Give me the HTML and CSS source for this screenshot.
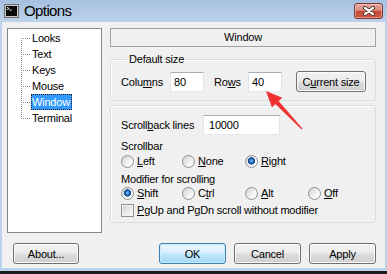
FILE: index.html
```html
<!DOCTYPE html>
<html>
<head>
<meta charset="utf-8">
<title>Options</title>
<link rel="stylesheet" href="styles.css">
</head>
<body>
<div class="win">
  <div class="titlebar">
    <svg class="appicon" width="15" height="14" viewBox="0 0 15 14">
      <rect x="0.5" y="0.5" width="14" height="13" fill="#c8c8c8" stroke="#6e6e6e"/>
      <rect x="2" y="2" width="11" height="10" fill="#0a0a0a"/>
      <path d="M3 3.3 L5.2 4.5 L3 5.7" stroke="#fff" fill="none" stroke-width="0.9"/>
      <rect x="5.5" y="5.6" width="2.2" height="0.9" fill="#fff"/>
    </svg>
    <span class="title">Options</span>
    <div class="close">
      <svg width="14" height="10" viewBox="0 0 14 10">
        <path d="M3 2 L11 8 M11 2 L3 8" stroke="#4b2a26" stroke-width="4" stroke-linecap="round"/>
        <path d="M3 2 L11 8 M11 2 L3 8" stroke="#fff" stroke-width="2.2" stroke-linecap="round"/>
      </svg>
    </div>
  </div>
  <div class="client">
    <div class="main">
      <ul class="tree">
        <li class="first"><span class="branch"></span><span class="lbl">Looks</span></li>
        <li><span class="branch"></span><span class="lbl">Text</span></li>
        <li><span class="branch"></span><span class="lbl">Keys</span></li>
        <li><span class="branch"></span><span class="lbl">Mouse</span></li>
        <li><span class="branch"></span><span class="lbl sel">Window</span></li>
        <li class="last"><span class="branch"></span><span class="lbl">Terminal</span></li>
      </ul>
      <div class="panel">
        <div class="header">Window</div>
        <fieldset class="group g1">
          <legend>Default size</legend>
          <div class="row">
            <span class="lab lab-cols">Colu<u>m</u>ns</span>
            <span class="edit ed-small">80</span>
            <span class="lab lab-rows">Ro<u>w</u>s</span>
            <span class="edit ed-small">40</span>
            <span class="btn btn-cur">C<u>u</u>rrent size</span>
          </div>
        </fieldset>
        <fieldset class="group g2">
          <div class="row sb-row">
            <span class="lab lab-sb">Scroll<u>b</u>ack lines</span>
            <span class="edit ed-wide">10000</span>
          </div>
          <div class="caption cap1">Scrollbar</div>
          <div class="radios r1">
            <span class="opt"><span class="radio"></span><u>L</u>eft</span>
            <span class="opt"><span class="radio"></span><u>N</u>one</span>
            <span class="opt"><span class="radio on"></span><u>R</u>ight</span>
          </div>
          <div class="caption cap2">Modifier for scrolling</div>
          <div class="radios r2">
            <span class="opt"><span class="radio on"></span><u>S</u>hift</span>
            <span class="opt"><span class="radio"></span>C<u>t</u>rl</span>
            <span class="opt"><span class="radio"></span><u>A</u>lt</span>
            <span class="opt"><span class="radio"></span><u>O</u>ff</span>
          </div>
          <div class="opt chk-row"><span class="check"></span><u>P</u>gUp and PgDn scroll without modifier</div>
        </fieldset>
      </div>
    </div>
    <div class="buttons">
      <span class="btn btn-about">About...</span>
      <div class="btn-group">
        <span class="btn btn-ok">OK</span>
        <span class="btn">Cancel</span>
        <span class="btn">Apply</span>
      </div>
    </div>
  </div>
  <div class="frame-bottom"></div>
  <div class="shadow"></div>
  <svg class="arrow" width="387" height="274" viewBox="0 0 387 274">
    <polygon points="266,91 282.3,97.8 278.6,101.1 302.4,128.6 301.6,129.4 275.4,104.1 271.9,107.6" fill="#f03232"/>
  </svg>
</div>
</body>
</html>
```

FILE: styles.css
```css
* { box-sizing: border-box; }
html, body { margin: 0; padding: 0; }
body {
  width: 387px;
  height: 274px;
  overflow: hidden;
  font-family: "Liberation Sans", Arial, sans-serif;
  font-size: 11px;
  letter-spacing: -0.2px;
  color: #000;
}
u { text-decoration: underline; text-underline-offset: 1px; text-decoration-thickness: 1px; }

.win {
  position: relative;
  width: 387px;
  height: 274px;
  background: #bcd2eb;
  display: flex;
  flex-direction: column;
}

/* title bar */
.titlebar {
  height: 22px;
  flex: none;
  display: flex;
  align-items: flex-start;
  background: linear-gradient(#a6c0df, #bdd2eb);
}
.appicon { margin: 4px 0 0 4px; flex: none; }
.title {
  margin: 2px 0 0 5px;
  font-size: 15px;
  line-height: 18px;
  letter-spacing: -0.6px;
}
.close {
  margin: 3px 4px 0 auto;
  width: 29px;
  height: 16px;
  border: 1px solid #7e3a33;
  border-radius: 3px;
  background: linear-gradient(#e6a99f 0%, #d8897b 45%, #c44b36 52%, #cc5a45 100%);
  box-shadow: inset 0 0 0 1px rgba(255, 220, 210, 0.45);
  display: flex;
  align-items: center;
  justify-content: center;
}

/* client */
.client {
  margin: 0 2px;
  height: 246px;
  flex: none;
  background: #f0f0f0;
  display: flex;
  flex-direction: column;
  padding: 6px 9px 0 5px;
}
.main { display: flex; gap: 8px; }

/* tree */
.tree {
  width: 95px;
  height: 205px;
  margin: 0;
  padding: 1px 0 0 0;
  list-style: none;
  background: #fff;
  border: 1px solid #828790;
}
.tree li { display: flex; height: 16px; align-items: center; }
.branch {
  width: 23px;
  height: 16px;
  flex: none;
  background-image:
    repeating-linear-gradient(to bottom, #8a8a8a 0 1px, transparent 1px 2px),
    repeating-linear-gradient(to right, #8a8a8a 0 1px, transparent 1px 2px);
  background-repeat: no-repeat;
  background-size: 1px 16px, 8px 1px;
  background-position: 13px 0, 15px 8px;
}
.tree li.first .branch { background-size: 1px 8px, 8px 1px; background-position: 13px 8px, 15px 8px; }
.tree li.last .branch { background-size: 1px 9px, 8px 1px; background-position: 13px 0, 15px 8px; }
.lbl { padding: 0 2px 0 1px; line-height: 16px; height: 16px; }
.lbl.sel { background: #3399ff; color: #fff; outline: 1px dotted #222; outline-offset: -1px; }

/* right panel */
.panel { width: 266px; display: flex; flex-direction: column; }
.header {
  height: 19px;
  border: 1px solid #a3a3a3;
  text-align: center;
  line-height: 17px;
}
.group {
  margin: 0;
  min-width: 0;
  border: 1px solid #d5dfe5;
  border-radius: 3px;
  box-shadow: inset 1px 1px 0 #fff;
}
.group legend { padding: 0 2px; margin-left: 6px; line-height: 14px; }
.g1 { margin-top: 5px; padding: 5px 0 8px 10px; }
.g2 { margin-top: 4px; padding: 8px 0 4px 10px; }

.row { display: flex; align-items: center; height: 21px; }
.lab { flex: none; }
.lab-cols { width: 49px; }
.lab-rows { width: 34px; margin-left: 10px; }
.lab-sb { width: 82px; }
.edit {
  height: 20px;
  display: flex;
  align-items: center;
  padding-left: 3px;
  background: #fff;
  border: 1px solid #e2e3ea;
  border-top-color: #abadb3;
  border-bottom-color: #e3e9ef;
  flex: none;
}
.ed-small { width: 34px; }
.ed-wide { width: 77px; padding-left: 5px; }

.btn {
  height: 21px;
  display: flex;
  align-items: center;
  justify-content: center;
  border: 1px solid #707070;
  border-radius: 3px;
  background: linear-gradient(#f2f2f2 0%, #ebebeb 48%, #dddddd 52%, #cfcfcf 100%);
  box-shadow: inset 0 0 0 1px #fbfbfb;
  flex: none;
}
.btn-cur { width: 70px; margin-left: 14px; }

.caption { height: 14px; line-height: 14px; }
.cap1 { margin-top: 4px; }
.cap2 { margin-top: 3px; }
.radios { display: grid; grid-template-columns: 61px 63px 63px auto; }
.r1 { height: 16px; }
.r2 { height: 14px; }
.opt { display: flex; align-items: center; }
.radio {
  width: 13px;
  height: 13px;
  border-radius: 50%;
  border: 1px solid #8e8f8f;
  background: linear-gradient(135deg, #cfd0d0, #f4f4f4 60%, #ffffff);
  margin-right: 3px;
  flex: none;
}
.radio.on {
  background:
    radial-gradient(circle at 50% 45%, #9fd2f5 0, #3e8fd4 1.2px, #195aa6 2.6px, #0f4a8e 3.4px, rgba(15,74,142,0) 3.9px),
    linear-gradient(135deg, #cfd0d0, #f4f4f4 60%, #ffffff);
}
.chk-row { margin-top: 2px; height: 16px; }
.check {
  width: 13px;
  height: 13px;
  border: 1px solid #8e8f8f;
  background: linear-gradient(135deg, #cbcbcb, #f2f2f2 70%, #ffffff);
  box-shadow: inset 0 0 0 1px #f4f4f4;
  margin-right: 3px;
  flex: none;
}

/* bottom buttons */
.buttons {
  margin-top: 10px;
  padding-left: 6px;
  display: flex;
  justify-content: space-between;
}
.btn-about { width: 66px; }
.btn-group { display: flex; gap: 8px; }
.btn-group .btn { width: 67px; }
.btn-ok {
  border-color: #3c7fb1;
  background: linear-gradient(#eaf6fd 0%, #d9f0fc 48%, #bee6fd 52%, #a7d9f5 100%);
  box-shadow: inset 0 0 0 1px #c8ecfd;
}

.frame-bottom { height: 3px; flex: none; }
.shadow { height: 3px; flex: none; background: #1b1d20; }

.arrow { position: absolute; left: 0; top: 0; pointer-events: none; }
```
